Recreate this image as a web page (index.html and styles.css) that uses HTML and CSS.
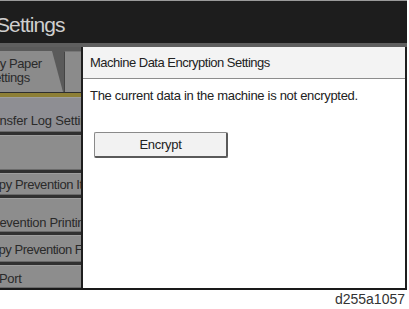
FILE: index.html
```html
<!DOCTYPE html>
<html lang="en">

<head>
    <meta charset="UTF-8">
    <meta name="viewport" content="width=device-width, initial-scale=1.0">
    <title>Settings</title>
    <link rel="stylesheet" href="styles.css">
</head>

<body>
    <div class="screen">
        <!-- Title bar -->
        <div class="title-bar">
            <h1>Settings</h1>
        </div>

        <div class="main">
            <!-- Left menu, scrolled sideways -->
            <div class="side">
                <div class="tabs">
                    <div class="tab tab-first">
                        <span class="clip-text tab-line-1">Copy Paper</span>
                        <span class="clip-text tab-line-2">Settings</span>
                    </div>
                    <div class="tab tab-second"></div>
                </div>
                <div class="gold-line"></div>
                <div class="side-item item-transfer"><span class="clip-text shift-tra">Transfer Log Setting</span></div>
                <div class="side-item item-empty"></div>
                <div class="side-item item-copy"><span class="clip-text shift-co">Copy Prevention Items</span></div>
                <div class="side-item item-print"><span class="clip-text shift-pr">Prevention Printing</span></div>
                <div class="side-item item-format"><span class="clip-text shift-co">Copy Prevention Format</span></div>
                <div class="side-item item-port"><span class="clip-text shift-port">Port</span></div>
            </div>

            <!-- Dialog -->
            <div class="dialog">
                <div class="dialog-head">Machine Data Encryption Settings</div>
                <div class="dialog-body">
                    <p>The current data in the machine is not encrypted.</p>
                    <button type="button" class="btn">Encrypt</button>
                </div>
            </div>
        </div>
    </div>

    <div class="caption">d255a1057</div>
</body>

</html>
```

FILE: styles.css
```css
/* Global styles */
body {
    margin: 0;
    padding: 0;
    background-color: #ffffff;
    font-family: 'Liberation Sans', Arial, sans-serif;
    color: #222;
}

.screen {
    width: 407px;
    height: 290px;
    display: flex;
    flex-direction: column;
    background-color: #5f5f5f;
}

/* Title bar */
.title-bar {
    height: 43px;
    background-color: #1d1d1d;
    border-top: 1px solid #9a9a9a;
    box-sizing: border-box;
    overflow: hidden;
}

.title-bar h1 {
    margin: 0;
    margin-left: -4px;
    padding-top: 11px;
    font-size: 21px;
    font-weight: normal;
    line-height: 26px;
    letter-spacing: -0.9px;
    color: #cfcfcf;
}

.main {
    flex: 1;
    display: flex;
    padding-top: 4px;
    border-bottom: 2px solid #1a1a1a;
}

/* Left menu */
.side {
    width: 81px;
    display: flex;
    flex-direction: column;
    background-color: #303030;
    overflow: hidden;
}

.tabs {
    height: 45px;
    display: flex;
    padding-top: 4px;
    box-sizing: border-box;
    background-color: #5a5a5a;
}

.tab {
    background-color: #8b8b8b;
    display: flex;
    flex-direction: column;
    overflow: hidden;
    font-size: 13px;
    line-height: 14px;
    letter-spacing: -0.4px;
    color: #2a2a2a;
    padding-top: 6px;
}

.tab-first {
    width: 63px;
    clip-path: polygon(0 0, 52px 0, 63px 100%, 0 100%);
}

.tab-second {
    flex: 1;
    margin-left: 1px;
    border-left: 1px solid #444;
    border-top: 1px solid #777;
}

.tab-line-1 {
    margin-left: -23px;
}

.tab-line-2 {
    margin-left: -14px;
}

.gold-line {
    height: 5px;
    box-sizing: border-box;
    background-color: #8d7f36;
    border-top: 1px solid #2e2e2e;
}

.side-item {
    margin-top: 3px;
    display: flex;
    align-items: center;
    box-sizing: border-box;
    overflow: hidden;
    white-space: nowrap;
    background-color: #8d8d8d;
    border-top: 1px solid #9e9e9e;
    border-bottom: 1px solid #6a6a6a;
    font-size: 13px;
    line-height: 15px;
    letter-spacing: -0.3px;
    color: #2a2a2a;
}

.item-transfer {
    height: 35px;
    margin-top: 0;
    align-items: flex-end;
    padding-bottom: 3px;
    letter-spacing: -0.2px;
    background-color: #8e8e93;
}

.item-empty {
    height: 35px;
}

.item-copy {
    height: 22px;
    letter-spacing: -0.4px;
}

.item-print {
    height: 34px;
    align-items: flex-end;
    padding-bottom: 1px;
}

.item-format {
    height: 27px;
    padding-top: 2px;
    letter-spacing: -0.5px;
}

.item-port {
    height: 23px;
    padding-top: 3px;
}

.clip-text {
    display: block;
    white-space: nowrap;
}

.shift-tra {
    margin-left: -19px;
}

.shift-co {
    margin-left: -17px;
}

.shift-pr {
    margin-left: -13px;
}

.shift-port {
    margin-left: -1px;
}

/* Dialog */
.dialog {
    flex: 1;
    display: flex;
    flex-direction: column;
    background-color: #ffffff;
    border-left: 2px solid #1e1e1e;
    border-right: 2px solid #1e1e1e;
}

.dialog-head {
    height: 31px;
    line-height: 31px;
    padding-left: 7px;
    background-color: #f3f3f3;
    border-bottom: 1px solid #8c8c8c;
    font-size: 13px;
    letter-spacing: -0.5px;
    color: #222;
}

.dialog-body {
    padding: 9px 7px;
}

.dialog-body p {
    margin: 0;
    font-size: 13px;
    line-height: 16px;
    letter-spacing: -0.3px;
}

.btn {
    display: block;
    width: 134px;
    height: 26px;
    margin-top: 28px;
    margin-left: 4px;
    background-color: #f2f2f2;
    border: 1px solid #8a8a8a;
    border-right: 2px solid #5a5a5a;
    border-bottom: 2px solid #5a5a5a;
    border-radius: 2px;
    font-family: inherit;
    font-size: 13px;
    letter-spacing: -0.3px;
    color: #222;
    padding: 0;
}

/* Figure number */
.caption {
    width: 405px;
    text-align: right;
    font-family: 'Liberation Sans', Arial, sans-serif;
    font-size: 14px;
    line-height: 16px;
    color: #333;
    padding-top: 1px;
}
```
